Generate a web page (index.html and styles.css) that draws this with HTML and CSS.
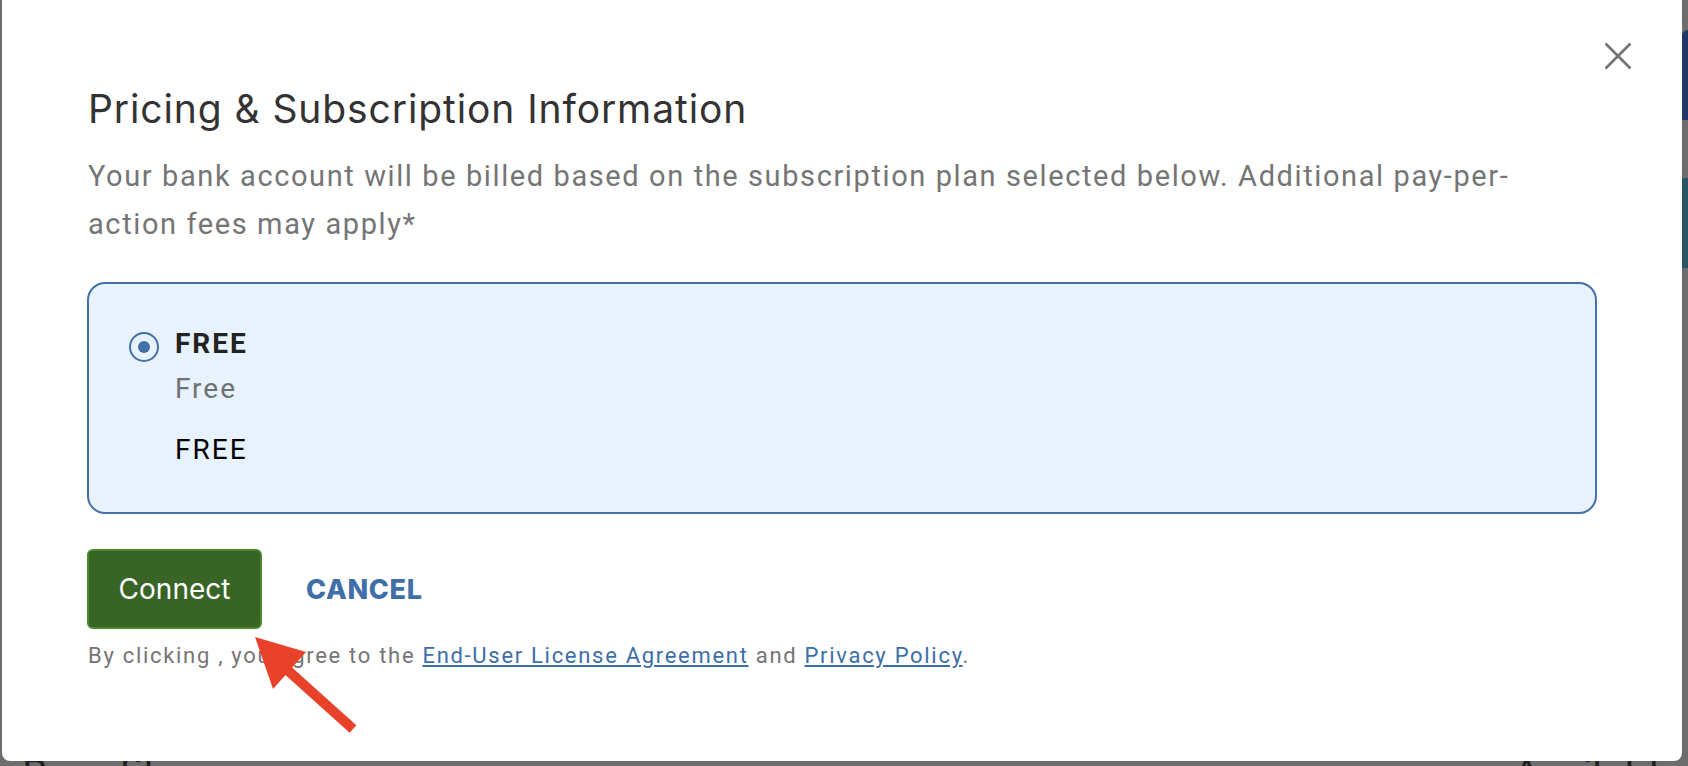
FILE: index.html
```html
<!DOCTYPE html>
<html lang="en">
<head>
  <meta charset="UTF-8" />
  <meta name="viewport" content="width=device-width, initial-scale=1.0" />
  <title>Pricing &amp; Subscription Information</title>
  <link rel="stylesheet" href="styles.css">
</head>
<body>
  <div class="page">
    <div class="page-main">
      <div class="page-bottom">
        <span>Benefits</span>
        <span>Available</span>
      </div>
    </div>
    <div class="page-side">
      <div class="side-pill"></div>
      <div class="side-teal"></div>
    </div>
  </div>

  <div class="modal" role="dialog" aria-labelledby="modalTitle">
    <button class="modal-close" aria-label="Close">
      <svg width="28" height="28" viewBox="0 0 28 28">
        <path d="M1.5 1.5 L26.5 26.5 M26.5 1.5 L1.5 26.5" stroke="#737373" stroke-width="2.6" fill="none" />
      </svg>
    </button>
    <h2 class="modal-title" id="modalTitle">Pricing &amp; Subscription Information</h2>
    <p class="modal-desc">Your bank account will be billed based on the subscription plan selected below. Additional pay-per-action fees may apply*</p>

    <label class="plan">
      <span class="plan-radio"></span>
      <span class="plan-info">
        <span class="plan-name">FREE</span>
        <span class="plan-desc">Free</span>
        <span class="plan-price">FREE</span>
      </span>
    </label>

    <div class="modal-actions">
      <button class="btn-connect">Connect</button>
      <button class="btn-cancel">CANCEL</button>
    </div>
    <p class="modal-legal">By clicking , you agree to the <a href="#">End-User License Agreement</a> and <a href="#">Privacy Policy</a>.</p>
  </div>

  <!-- annotation arrow -->
  <svg class="annotation" width="1688" height="766" viewBox="0 0 1688 766">
    <polygon points="255,637 273,689 306,652" fill="#e8432a" />
    <line x1="284" y1="667" x2="353" y2="729" stroke="#e8432a" stroke-width="10" />
  </svg>
</body>
</html>
```

FILE: styles.css
```css
body {
  margin: 0;
  font-family: Roboto, "Liberation Sans", Arial, sans-serif;
  overflow: hidden;
}
.page {
  display: flex;
  height: 100vh;
  background-color: #6d6d6d;
}
.page-main {
  flex: 1;
  display: flex;
  flex-direction: column;
  justify-content: flex-end;
}
.page-bottom {
  display: flex;
  justify-content: space-between;
  height: 12px;
  overflow: hidden;
  padding: 0 0 0 22px;
  font-family: Inter, sans-serif;
  font-size: 40px;
  line-height: 1;
  color: #1f1f1f;
}
.page-side {
  width: 6px;
  display: flex;
  flex-direction: column;
  padding-top: 30px;
  gap: 58px;
}
.side-pill {
  height: 90px;
  background-color: #1e3765;
  border-radius: 6px 0 0 0;
}
.side-teal {
  height: 90px;
  background-color: #275763;
}

.modal {
  position: fixed;
  top: 0;
  left: 2px;
  right: 6px;
  bottom: 5px;
  background-color: #fff;
  border-radius: 0 0 8px 8px;
  padding: 86px 85px 0 86px;
  box-sizing: border-box;
}
.modal-close {
  position: absolute;
  top: 42px;
  right: 50px;
  width: 28px;
  height: 28px;
  padding: 0;
  border: none;
  background: none;
  cursor: pointer;
}
.modal-close svg {
  display: block;
}
.modal-title {
  margin: 0;
  font-family: Inter, sans-serif;
  font-size: 39px;
  font-weight: 400;
  line-height: 46px;
  letter-spacing: 0.9px;
  color: #333;
}
.modal-desc {
  margin: 20px 0 0;
  max-width: 1450px;
  font-size: 29px;
  line-height: 48px;
  letter-spacing: 1.6px;
  color: #757575;
}

.plan {
  display: flex;
  gap: 16px;
  margin: 34px 0 0 -1px;
  padding: 37px 40px 40px 40px;
  border: 2px solid #4470a8;
  border-radius: 18px;
  background-color: #e8f2fc;
  cursor: pointer;
}
.plan-radio {
  width: 30px;
  height: 30px;
  margin-top: 11px;
  border: 2px solid #4470a8;
  border-radius: 50%;
  box-sizing: border-box;
  display: flex;
  align-items: center;
  justify-content: center;
  flex-shrink: 0;
}
.plan-radio::after {
  content: "";
  width: 12px;
  height: 12px;
  border-radius: 50%;
  background-color: #4470a8;
}
.plan-info {
  display: flex;
  flex-direction: column;
  font-size: 28px;
  line-height: 45px;
  letter-spacing: 2px;
}
.plan-name {
  font-weight: 700;
  color: #222;
}
.plan-desc {
  color: #6f7175;
}
.plan-price {
  margin-top: 16px;
  color: #000;
}

.modal-actions {
  display: flex;
  align-items: center;
  gap: 44px;
  margin: 35px 0 0 -1px;
}
.btn-connect {
  width: 175px;
  height: 80px;
  border: 2px solid #4a8a2c;
  border-radius: 6px;
  background-color: #386525;
  color: #fff;
  font-family: Inter, sans-serif;
  font-size: 28px;
  cursor: pointer;
}
.btn-cancel {
  padding: 0;
  border: none;
  background: none;
  color: #3f6fa8;
  font-family: Inter, sans-serif;
  font-size: 27px;
  font-weight: 800;
  letter-spacing: 0.7px;
  cursor: pointer;
}
.modal-legal {
  margin: 12px 0 0;
  font-size: 22px;
  line-height: 30px;
  letter-spacing: 1.7px;
  color: #757575;
}
.modal-legal a {
  color: #3d6ea8;
}

.annotation {
  position: fixed;
  left: 0;
  top: 0;
  pointer-events: none;
}
```
